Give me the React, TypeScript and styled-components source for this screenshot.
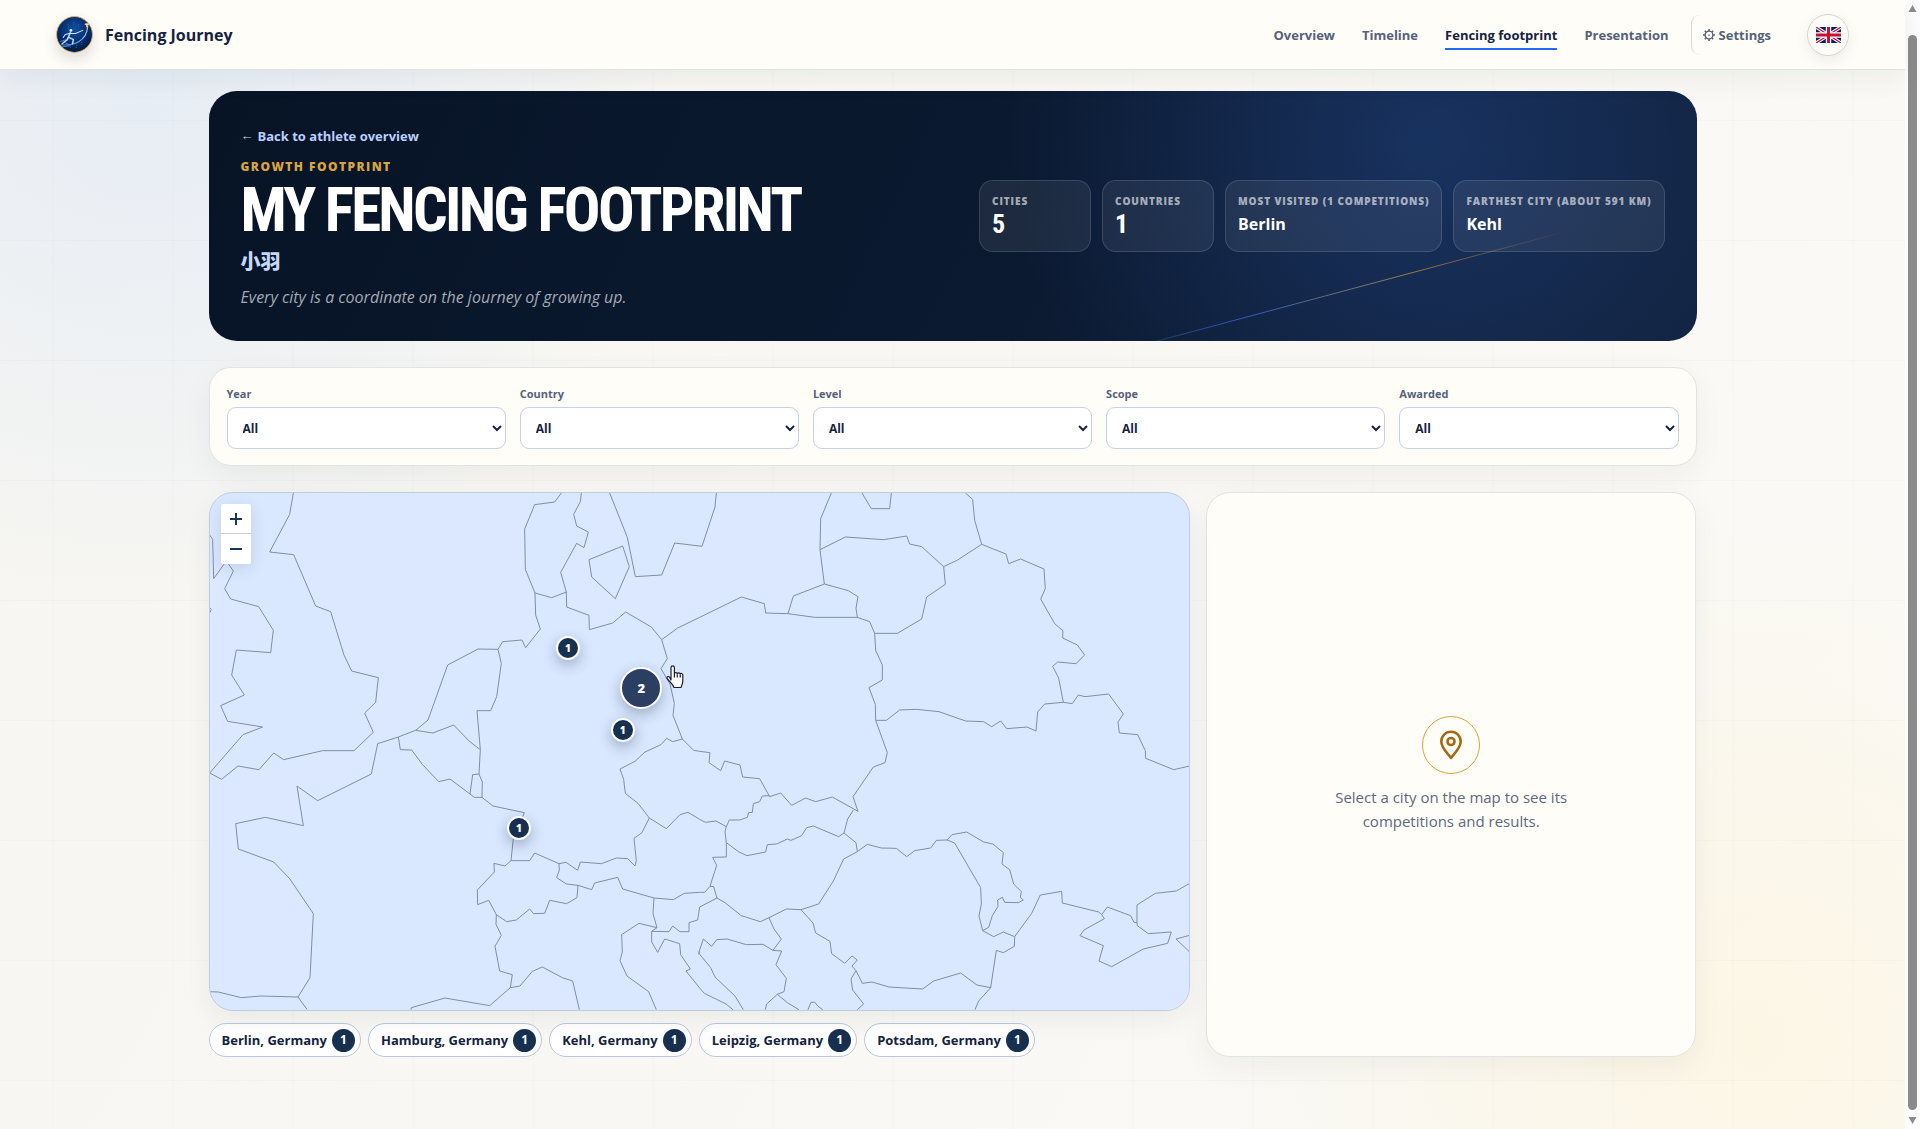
import React, { useState } from "react";
import styled, { createGlobalStyle, css } from "styled-components";

const sans = `"Open Sans", "Noto Sans", "Noto Sans CJK SC", sans-serif`;
const narrow = `"Arial Narrow", "Liberation Sans Narrow", "Roboto Condensed", Roboto, sans-serif`;

const ink = "#14233f";
const muted = "#54627a";
const paper = "#fffdf8";
const navy = "#17304f";

const GlobalStyle = createGlobalStyle`
  *, *::before, *::after { box-sizing: border-box; }
  html { scrollbar-width: none; }
  body {
    margin: 0;
    color: ${ink};
    background: #f8f7f3;
    font-family: ${sans};
    font-size: 16px;
    line-height: 24px;
  }
  h1, p, ul, dl, dd { margin: 0; padding: 0; }
  button, select { font: inherit; color: inherit; }
`;

const Shell = styled.div`
  display: flex;
  align-items: stretch;
  min-height: 100vh;
`;

const Page = styled.div`
  flex: 1;
  min-width: 0;
  background:
    linear-gradient(90deg, rgba(30, 60, 110, 0.025) 1px, transparent 1px) center top / 120px 120px,
    linear-gradient(rgba(30, 60, 110, 0.025) 1px, transparent 1px) center top / 120px 120px,
    radial-gradient(circle at 8% 8%, rgba(190, 215, 255, 0.28), transparent 26%),
    radial-gradient(circle at 92% 92%, rgba(255, 236, 180, 0.26), transparent 26%),
    linear-gradient(120deg, #f6f5f1, #fbfaf6);
`;

const Header = styled.header`
  position: sticky;
  top: 0;
  z-index: 5;
  display: flex;
  align-items: center;
  justify-content: space-between;
  height: 70px;
  padding: 0 56px;
  background: ${paper};
  border-bottom: 1px solid #e3e2df;
  box-shadow: 0 8px 28px rgba(16, 32, 60, 0.06);
`;

const Brand = styled.a`
  display: flex;
  align-items: center;
  gap: 12px;
  color: ${ink};
  font-size: 16px;
  font-weight: 700;
  text-decoration: none;

  svg {
    border-radius: 50%;
    box-shadow: 0 6px 14px rgba(16, 32, 60, 0.16);
  }
`;

const Nav = styled.nav`
  display: flex;
  align-items: center;
  gap: 27px;
  font-size: 13px;
  font-weight: 700;
  line-height: 20px;
`;

const NavLink = styled.a<{ $active?: boolean }>`
  padding: 5px 0 3px;
  color: ${(p) => (p.$active ? ink : muted)};
  border-bottom: 2px solid ${(p) => (p.$active ? "#2469f5" : "transparent")};
  text-decoration: none;
`;

const SettingsLink = styled.a`
  display: flex;
  align-items: center;
  gap: 4px;
  height: 40px;
  margin-left: -5px;
  padding: 0 9px 0 11px;
  color: ${muted};
  border-left: 1px solid #d9d7d0;
  border-radius: 9px;
  text-decoration: none;
`;

const LanguageButton = styled.button`
  display: grid;
  place-items: center;
  width: 42px;
  height: 42px;
  padding: 0;
  background: ${paper};
  border: 1px solid #d9d5cc;
  border-radius: 50%;
  box-shadow: 0 5px 14px rgba(16, 32, 60, 0.08);
`;

const Main = styled.main`
  display: grid;
  gap: 26px;
  width: calc(100% - 48px);
  max-width: 1488px;
  margin: 0 auto;
  padding: 21px 0 72px;
`;

const Hero = styled.section`
  position: relative;
  display: flex;
  align-items: center;
  justify-content: space-between;
  gap: 32px;
  padding: 32px;
  overflow: hidden;
  color: #fff;
  background:
    radial-gradient(circle at 82% 20%, rgba(43, 88, 170, 0.36), transparent 34%),
    linear-gradient(115deg, #071426, #0b1930 50%, #10203a);
  border-radius: 28px;

  &::after {
    content: "";
    position: absolute;
    right: 8%;
    bottom: 18%;
    width: 500px;
    height: 1px;
    background: linear-gradient(90deg, transparent, #3f7bf0, #d9a441, transparent);
    opacity: 0.65;
    transform: rotate(-15deg);
  }
`;

const BackLink = styled.a`
  display: flex;
  gap: 4px;
  color: #b9d0ff;
  font-size: 13px;
  font-weight: 700;
  line-height: 26px;
  text-decoration: none;

  span {
    font-family: "Liberation Sans", sans-serif;
    font-weight: 400;
  }
`;

const Eyebrow = styled.p`
  margin-top: 8px;
  color: #d9a441;
  font-size: 12px;
  font-weight: 800;
  letter-spacing: 0.12em;
  line-height: 20px;
  text-transform: uppercase;
`;

const Title = styled.h1`
  padding-top: 2px;
  font-family: ${narrow};
  font-size: 61px;
  font-weight: 700;
  letter-spacing: -0.045em;
  line-height: 62px;
  text-transform: uppercase;
`;

const Athlete = styled.p`
  color: #c6d8fb;
  font-size: 20px;
  font-weight: 800;
  line-height: 41px;
`;

const Motto = styled.p`
  padding-top: 3px;
  color: #a4aab3;
  font-size: 16px;
  font-style: italic;
  line-height: 24px;
`;

const Stats = styled.dl`
  display: flex;
  flex-wrap: wrap;
  gap: 11px;
`;

const Stat = styled.div`
  min-width: 112px;
  min-height: 72px;
  padding: 12px;
  background: rgba(255, 255, 255, 0.07);
  border: 1px solid rgba(255, 255, 255, 0.13);
  border-radius: 14px;

  dt {
    color: rgba(255, 255, 255, 0.62);
    font-size: 10px;
    font-weight: 800;
    letter-spacing: 0.09em;
    line-height: 16px;
    text-transform: uppercase;
  }
`;

const StatValue = styled.dd<{ $numeric?: boolean }>`
  line-height: 30px;
  ${(p) =>
    p.$numeric
      ? css`
          font-family: ${narrow};
          font-size: 26px;
          font-weight: 700;
        `
      : css`
          font-size: 16px;
          font-weight: 700;
        `}
`;

const surface = css`
  background: ${paper};
  border: 1px solid #e2e3e3;
  box-shadow: 0 10px 30px rgba(16, 32, 60, 0.05);
`;

const Filters = styled.form`
  ${surface}
  display: grid;
  grid-template-columns: repeat(5, 1fr);
  gap: 14px;
  padding: 16px 17px;
  border-radius: 22px;
`;

const Field = styled.label`
  display: grid;
  gap: 4px;
  color: ${muted};
  font-size: 11px;
  font-weight: 700;
  line-height: 19px;
`;

const Select = styled.select`
  width: 100%;
  height: 42px;
  padding: 0 11px;
  color: ${ink};
  background: #fff;
  border: 1px solid #c5d1e6;
  border-radius: 9px;
  font-size: 12px;
  font-weight: 700;
`;

const Explorer = styled.div`
  display: grid;
  grid-template-columns: 2fr 1fr;
  gap: 16px;
`;

const MapColumn = styled.div`
  display: grid;
  gap: 12px;
  min-width: 0;
`;

const MapFrame = styled.section`
  position: relative;
  height: 519px;
  overflow: hidden;
  background: #d9e8ff;
  border: 1px solid #bccde8;
  border-radius: 24px;
  box-shadow: 0 10px 26px rgba(16, 32, 60, 0.06);
`;

const MapDrawing = styled.svg`
  display: block;
  width: 100%;
  height: 100%;
`;

const ZoomControl = styled.div`
  position: absolute;
  top: 11px;
  left: 11px;
  display: grid;
  background: #fff;
  border-radius: 2px;
  box-shadow: 0 4px 16px rgba(16, 32, 60, 0.12);
`;

const ZoomButton = styled.button`
  display: grid;
  place-items: center;
  width: 30px;
  height: 30px;
  padding: 0;
  color: #16355f;
  background: none;
  border: 0;

  &:first-child {
    border-bottom: 1px solid #ccc;
  }
`;

const Marker = styled.button<{ $x: number; $y: number; $cluster?: boolean }>`
  position: absolute;
  left: ${(p) => p.$x}%;
  top: ${(p) => p.$y}%;
  display: grid;
  place-items: center;
  width: ${(p) => (p.$cluster ? 42 : 24)}px;
  height: ${(p) => (p.$cluster ? 42 : 24)}px;
  padding: 0;
  color: #fff;
  background: ${(p) => (p.$cluster ? "#2b3f63" : navy)};
  border: 2px solid #fff;
  border-radius: 50%;
  box-shadow: 0 5px 14px rgba(16, 32, 60, 0.3);
  font-size: ${(p) => (p.$cluster ? 13 : 10)}px;
  font-weight: 800;
  line-height: 16px;
  transform: translate(-50%, -50%);
`;

const Pointer = styled.svg`
  position: absolute;
  left: 46.6%;
  top: 33.2%;
`;

const Chips = styled.ul`
  display: flex;
  flex-wrap: wrap;
  gap: 7px;
  list-style: none;
`;

const Chip = styled.button`
  display: flex;
  align-items: center;
  gap: 5px;
  height: 34px;
  padding: 0 5px 0 12px;
  background: #fff;
  border: 1px solid #b9c7e0;
  border-radius: 17px;
  font-size: 13px;
  font-weight: 700;
  line-height: 20px;
`;

const ChipCount = styled.span`
  display: grid;
  place-items: center;
  width: 23px;
  height: 23px;
  color: #fff;
  background: ${navy};
  border-radius: 50%;
  font-size: 12px;
`;

const Detail = styled.aside`
  ${surface}
  display: grid;
  align-content: center;
  justify-items: center;
  gap: 11px;
  padding: 24px;
  border-radius: 24px;
  color: #5b6980;
  font-size: 15px;
  text-align: center;

  p {
    max-width: 270px;
  }
`;

const PinCircle = styled.span`
  display: grid;
  place-items: center;
  width: 58px;
  height: 58px;
  border: 1px solid #d9a441;
  border-radius: 50%;
`;

const Rail = styled.div`
  position: sticky;
  top: 0;
  display: flex;
  flex-direction: column;
  align-items: center;
  gap: 23px;
  width: 15px;
  height: 100vh;
  padding: 4px 0;
  background: #fcfcfc;

  svg {
    flex: none;
  }
`;

const Thumb = styled.span`
  flex: 1;
  width: 9px;
  margin-bottom: -16px;
  background: #8b8b8b;
  border-radius: 5px;
`;

const Logo = () => (
  <svg width="37" height="37" viewBox="0 0 36 36" aria-hidden="true">
    <defs>
      <radialGradient id="orb" cx="50%" cy="35%" r="65%">
        <stop offset="0" stopColor="#10509f" />
        <stop offset="0.55" stopColor="#082f70" />
        <stop offset="1" stopColor="#04173c" />
      </radialGradient>
      <linearGradient id="trail" x1="0" y1="1" x2="1" y2="0">
        <stop offset="0" stopColor="#3b8cf0" />
        <stop offset="0.6" stopColor="#8dbcf2" />
        <stop offset="1" stopColor="#f5c982" />
      </linearGradient>
    </defs>
    <circle cx="18" cy="18" r="17.5" fill="url(#orb)" stroke="#d4ad66" />
    <path d="M12 8v5M17 6v3M22 8v4M25 25v4M14 28v4M20 28v3" stroke="#1d69bd" strokeWidth="1" strokeDasharray="1 1" />
    <path d="M5 28c11 1 25-2 26-19" fill="none" stroke="url(#trail)" strokeWidth="1.1" />
    <path d="M4 25l6-2M6 30l8-1M9 26l4 2" stroke="#4c9af5" strokeWidth="0.8" />
    <circle cx="14.5" cy="14" r="1.4" fill="#e8f2ff" />
    <path d="M14 16l-3 7-5 4M13 21l4 2-1 4" fill="none" stroke="#b9d6fb" strokeWidth="1.5" strokeLinecap="round" strokeLinejoin="round" />
    <path d="M14 17l5 0 7-3M13 17l-4 1-2 3" fill="none" stroke="#cfe3ff" strokeWidth="1" strokeLinecap="round" strokeLinejoin="round" />
    <path d="M28 8h4M30 7v4" stroke="#ffd99a" strokeWidth="1.4" />
  </svg>
);

const Gear = () => (
  <svg width="12" height="12" viewBox="0 0 12 12" fill="none" stroke="currentColor" aria-hidden="true">
    <circle cx="6" cy="6" r="3.9" strokeWidth="1.4" />
    <circle cx="6" cy="6" r="0.8" fill="currentColor" stroke="none" />
    <path d="M6 0v2M6 10v2M0 6h2M10 6h2M1.8 1.8l1.3 1.3M8.9 8.9l1.3 1.3M1.8 10.2l1.3-1.3M8.9 3.1l1.3-1.3" strokeWidth="1.5" />
  </svg>
);

const UnionFlag = () => (
  <svg width="25" height="16" viewBox="0 0 60 38" preserveAspectRatio="none" aria-hidden="true">
    <path fill="#012169" d="M0 0h60v38H0z" />
    <path d="M0 0l60 38M60 0L0 38" stroke="#fff" strokeWidth="8" />
    <path d="M0 0l60 38M60 0L0 38" stroke="#c8102e" strokeWidth="3" />
    <path d="M30 0v38M0 19h60" stroke="#fff" strokeWidth="13" />
    <path d="M30 0v38M0 19h60" stroke="#c8102e" strokeWidth="7" />
  </svg>
);

const Pin = () => (
  <svg width="24" height="30" viewBox="0 0 24 30" fill="none" stroke="#a36a12" strokeWidth="2.6" strokeLinejoin="round" aria-hidden="true">
    <path d="M12 28C8 22.500 2.300 18 2.300 11.500a9.700 9.700 0 0 1 19.400 0C21.700 18 16 22.500 12 28z" />
    <circle cx="12" cy="11.500" r="3.500" />
  </svg>
);

/* Outlines are stored per map sheet; each sheet is 1500 x 855 map units. */
const sheets: { at: [number, number]; lines: string[] }[] = [
  {
    at: [0, 0],
    lines: [
      "281,24 270,88 210,201 282,209 348,363 393,380 433,510 456,558 536,578 528,652 495,684 521,742 463,797 369,797 252,824 222,804 178,854 115,843 66,883 30,864 130,749 189,726 84,709 63,662 134,630 96,570 110,495 213,503 221,436 177,365 93,342 75,311 101,258 80,228 42,281 39,163 30,150",
      "30,368 35,373 30,384",
      "1085,24 1065,51 1005,59 975,132 977,253 1006,324 1008,390 1022,432 978,488 967,465 909,470 895,493 835,492 744,540 685,705 648,736 596,756 534,776 515,867",
      "1006,324 1056,338 1100,321",
      "1145,24 1142,50 1122,88 1131,123 1166,141 1153,188 1131,175 1083,262 1100,321 1101,366 1168,391 1169,434 1239,414 1278,381 1355,426 1386,464 1434,429 1500,397",
      "1168,224 1269,183 1289,245 1247,341 1176,276 1168,224",
      "1230,24 1283,157 1307,275 1386,270 1425,174 1507,184 1546,66 1550,24",
      "1386,464 1403,521 1384,551 1411,597 1424,655 1420,691 1448,762 1482,796 1500,799",
      "1448,762 1419,770 1401,760 1384,779 1336,801 1306,829 1261,852 1272,883",
      "895,493 905,535 891,635 873,677 832,677 842,794 838,867",
      "648,736 700,744 762,720 808,768 842,794",
      "596,756 602,794 636,795 668,838 717,890",
    ],
  },
  {
    at: [1500, 0],
    lines: [
      "0,397 125,336 194,356 198,384 265,386 345,397 473,397 510,410 525,445 528,496 548,540 548,585 508,608 527,658 528,706 563,803 556,833 521,846 460,935",
      "0,799 31,803 28,833 63,857 75,828 121,840 129,876",
      "529,706 560,706 600,675 650,673 718,680 798,708 852,710 876,725 903,708 921,731 982,726 1009,738 1014,681 1035,657 1091,652 1118,656 1136,630 1156,635 1227,627 1271,687 1255,711 1259,744 1314,749 1337,797 1338,820 1422,854 1470,843",
      "1091,652 1077,579 1059,544 1074,531 1129,536 1155,510 1133,480 1089,459 1090,437 1065,416 1023,342 1037,311 1033,252 963,222 927,236 919,207 846,178 825,106 819,43 797,24",
      "846,178 774,225 732,245 666,185 630,177 621,153 552,164 437,156 361,194 363,101 395,24",
      "361,194 374,297 281,333 265,386",
      "374,297 446,317 475,335 469,370 473,397",
      "732,245 737,298 681,336 666,402 593,445 525,445",
      "487,24 515,71 570,71 575,24",
    ],
  },
  {
    at: [0, 855],
    lines: [
      "515,12 354,92 292,48 311,167 197,142 108,161 116,237 222,276 270,326 341,431 331,623 295,681 322,718",
      "295,681 184,678 125,683 56,666 30,665",
      "1272,28 1277,70 1315,100 1349,144",
      "717,35 751,27 811,72 824,82 847,82 880,108 974,128 955,174 941,206 934,272",
      "811,72 819,14 838,12 848,36 847,82",
      "934,272 990,272 1005,249 1078,281 1099,277 1134,301 1142,276 1205,281 1250,264 1284,266 1306,288 1310,272 1303,205 1327,188 1349,144 1400,176 1441,134 1465,127 1500,148",
      "934,272 916,288 883,280 884,306 833,360 834,404 867,391 890,434 921,455 950,450 990,417 1002,431 1035,430 1050,391 1101,401 1132,383 1135,346 1100,342 1071,323 1079,300 1078,281",
      "1135,346 1176,359 1185,339 1254,322 1269,357 1363,384 1421,389 1454,370 1500,367",
      "890,434 889,463 905,496 886,529 900,603 938,614 932,653 961,648 998,604 1028,591 1088,623 1119,633 1139,719",
      "634,719 635,713 736,684 870,707 932,653",
      "1363,384 1360,431 1372,473 1318,460 1266,494 1268,546 1261,572 1282,618 1347,665 1370,719",
      "1372,473 1356,484 1356,516 1374,547 1395,507 1440,521 1443,554 1472,597 1459,603 1500,654",
      "1356,484 1408,485 1419,468 1441,485 1468,485 1468,458 1494,450 1500,411",
    ],
  },
  {
    at: [1500, 855],
    lines: [
      "129,21 180,26 210,80 243,69 276,106 318,84 348,95 398,81 475,124 460,80",
      "210,77 188,78 180,95 161,101 158,127 147,128 143,142 120,150 89,150 80,170 76,185 80,218 80,261 39,262 51,286 31,349 42,350 52,384 76,398 125,437 182,455 208,443 260,417 304,419 357,402 401,333 432,267 473,245 469,218 433,189 444,147 461,120",
      "0,148 17,157 49,153 80,170",
      "0,367 15,367 31,349",
      "0,411 52,384",
      "80,218 118,246 142,257 198,246 203,224 231,222 263,207 274,211 306,197 321,173 341,168 417,200 433,189",
      "0,654 14,670 79,702 100,719",
      "-3,553 0,540 11,507 36,529 51,509 82,507 140,524 190,523 220,541 246,543 229,584 260,625 253,665 233,673 201,702 197,719",
      "233,673 263,698 298,719",
      "-3,545 0,553 33,593 46,621 106,678 131,719",
      "208,443 223,477 245,507 220,541",
      "304,419 340,459 348,489 391,514 396,551 435,580 457,558 473,570 457,588 469,602 488,640 517,636 568,651 669,657 702,633 783,609 832,645 873,653 890,541 911,548 944,529 945,500 911,486 882,500 849,482 838,438 845,402 843,353 765,219 742,210 710,211 693,234 645,242 621,260 590,235 545,234 503,223 473,245",
      "469,602 454,627 459,660 492,702 473,719",
      "873,653 837,693 826,719",
      "325,719 334,697 345,696 354,708 369,719",
      "742,210 757,194 801,186 852,216 880,222 911,248 907,282 930,299 942,342 965,365 962,382 971,390 956,398 915,397 908,382 894,390 895,409 878,437 867,472 849,482",
      "945,500 996,430 1022,375 1086,364 1088,399 1197,426 1206,434 1223,411 1293,437 1303,457 1312,458 1312,405 1367,370 1430,363 1470,340",
      "1206,434 1214,446 1153,480 1141,497 1211,527 1198,573 1236,590 1331,537 1404,520 1415,486 1346,491 1313,467 1312,458",
      "1470,496 1429,507 1470,546",
    ],
  },
];

const seas = [
  "281,24 270,88 210,201 282,209 348,363 393,380 433,510 456,558 536,578 528,652 495,684 521,742 463,797 369,797 252,824 222,804 178,854 115,843 66,883 30,864 30,1520 56,1521 125,1538 295,1536 331,1478 341,1286 270,1181 222,1131 116,1092 108,1016 197,997 311,1022 292,903 354,947 515,867 534,776 648,736 685,705 744,540 835,492 909,470 967,465 978,488 1022,432 1008,390 1006,324 977,253 975,132 1005,59 1065,51 1085,24",
  "1145,24 1142,50 1122,88 1166,141 1153,188 1131,175 1083,262 1100,321 1101,366 1168,391 1169,434 1239,414 1278,381 1355,426 1386,464 1434,429 1625,336 1694,356 1698,384 1765,386 1781,333 1874,297 1861,194 1863,101 1895,24 1550,24 1546,66 1507,184 1425,174 1386,270 1307,275 1283,157 1230,24",
  "30,150 39,163 42,281 80,228 101,258 75,311 93,342 177,365 221,436 213,503 110,495 96,570 134,630 63,662 84,709 189,726 130,749 30,864",
  "634,1575 736,1539 870,1562 932,1508 998,1459 1028,1446 1119,1488 1139,1575",
  "1372,1328 1318,1315 1266,1349 1261,1427 1282,1473 1347,1520 1370,1575 1600,1575 1500,1509 1459,1458 1472,1452 1443,1409 1440,1376 1395,1362 1374,1402 1356,1371",
  "2326,1575 2373,1508 2390,1396 2444,1384 2445,1355 2522,1230 2586,1219 2588,1254 2706,1289 2714,1301 2641,1352 2711,1382 2698,1428 2736,1445 2904,1375 2915,1341 2813,1322 2812,1260 2867,1225 2970,1195 2970,1575",
];

const EuropeMap = () => (
  <MapDrawing viewBox="30 24 2940 1551" preserveAspectRatio="xMidYMid slice" role="img" aria-label="Map of central Europe">
    {seas.map((points) => (
      <polygon key={points} points={points} fill="#dce8ff" />
    ))}
    <polygon points="1168,224 1269,183 1289,245 1247,341 1176,276" fill="#d9e8ff" />
    <g fill="none" stroke="#7f8ea8" strokeWidth="3" strokeLinejoin="round">
      {sheets.map(({ at, lines }) => (
        <g key={at.join()} transform={`translate(${at[0]} ${at[1]})`}>
          {lines.map((points) => (
            <polyline key={points} points={points} />
          ))}
        </g>
      ))}
    </g>
  </MapDrawing>
);

const navItems = ["Overview", "Timeline", "Fencing footprint", "Presentation"];

const stats = [
  { label: "Cities", value: "5", numeric: true },
  { label: "Countries", value: "1", numeric: true },
  { label: "Most visited (1 competitions)", value: "Berlin" },
  { label: "Farthest city (about 591 km)", value: "Kehl" },
];

const filters = ["Year", "Country", "Level", "Scope", "Awarded"];

const markers = [
  { name: "Hamburg", count: 1, x: 36.6, y: 30 },
  { name: "Berlin and Potsdam", count: 2, x: 44.1, y: 37.8, cluster: true },
  { name: "Leipzig", count: 1, x: 42.2, y: 45.8 },
  { name: "Kehl", count: 1, x: 31.6, y: 64.8 },
];

const cities = ["Berlin", "Hamburg", "Kehl", "Leipzig", "Potsdam"];

export default function App() {
  const [values, setValues] = useState<Record<string, string>>({});

  return (
    <>
      <GlobalStyle />
      <Shell>
        <Page>
          <Header>
            <Brand href="#home">
              <Logo />
              Fencing Journey
            </Brand>
            <Nav aria-label="Main">
              {navItems.map((item) => (
                <NavLink key={item} href="#" $active={item === "Fencing footprint"}>
                  {item}
                </NavLink>
              ))}
              <SettingsLink href="#settings">
                <Gear />
                Settings
              </SettingsLink>
              <LanguageButton type="button" aria-label="Language">
                <UnionFlag />
              </LanguageButton>
            </Nav>
          </Header>

          <Main>
            <Hero>
              <div>
                <BackLink href="#overview">
                  <span>←</span>
                  Back to athlete overview
                </BackLink>
                <Eyebrow>Growth footprint</Eyebrow>
                <Title>My fencing footprint</Title>
                <Athlete>小羽</Athlete>
                <Motto>Every city is a coordinate on the journey of growing up.</Motto>
              </div>
              <Stats>
                {stats.map((stat) => (
                  <Stat key={stat.label}>
                    <dt>{stat.label}</dt>
                    <StatValue $numeric={stat.numeric}>{stat.value}</StatValue>
                  </Stat>
                ))}
              </Stats>
            </Hero>

            <Filters>
              {filters.map((name) => (
                <Field key={name}>
                  {name}
                  <Select
                    value={values[name] ?? "All"}
                    onChange={(e) => setValues({ ...values, [name]: e.target.value })}
                  >
                    <option>All</option>
                  </Select>
                </Field>
              ))}
            </Filters>

            <Explorer>
              <MapColumn>
                <MapFrame>
                  <EuropeMap />
                  <ZoomControl>
                    <ZoomButton type="button" aria-label="Zoom in">
                      <svg width="14" height="14" viewBox="0 0 14 14" stroke="currentColor" strokeWidth="2">
                        <path d="M1 7h12M7 1v12" />
                      </svg>
                    </ZoomButton>
                    <ZoomButton type="button" aria-label="Zoom out">
                      <svg width="14" height="14" viewBox="0 0 14 14" stroke="currentColor" strokeWidth="2">
                        <path d="M1 7h12" />
                      </svg>
                    </ZoomButton>
                  </ZoomControl>
                  {markers.map((m) => (
                    <Marker key={m.name} type="button" aria-label={m.name} $x={m.x} $y={m.y} $cluster={m.cluster}>
                      {m.count}
                    </Marker>
                  ))}
                  <Pointer width="18" height="24" viewBox="0 0 18 24" aria-hidden="true">
                    <path
                      d="M5 15V2.500a1.700 1.700 0 0 1 3.400 0V9c0-2 2.900-1.800 2.900 0 .2-1.600 2.800-1.500 2.900.3.200-1.300 2.600-1.100 2.600.6V16c0 3-1.200 4-1.700 6.500H8c-.6-2.500-3-4.500-6.600-8.500-1.300-2 .9-3.200 2.200-1.800z"
                      fill="#fff"
                      stroke="#1b1f30"
                      strokeWidth="1.2"
                      strokeLinejoin="round"
                    />
                    <path d="M8.400 9v3.500M11.300 9.500v3M14.200 10v2.500" stroke="#1b1f30" strokeWidth="1.200" />
                  </Pointer>
                </MapFrame>
                <Chips>
                  {cities.map((city) => (
                    <li key={city}>
                      <Chip type="button">
                        {city}, Germany
                        <ChipCount>1</ChipCount>
                      </Chip>
                    </li>
                  ))}
                </Chips>
              </MapColumn>
              <Detail>
                <PinCircle>
                  <Pin />
                </PinCircle>
                <p>Select a city on the map to see its competitions and results.</p>
              </Detail>
            </Explorer>
          </Main>
        </Page>
        <Rail aria-hidden="true">
          <svg width="9" height="8" viewBox="0 0 9 8">
            <path d="M4.500 1L8.500 8H.5z" fill="#8b8b8b" />
          </svg>
          <Thumb />
          <svg width="9" height="8" viewBox="0 0 9 8">
            <path d="M4.500 7L8.500 0H.5z" fill="#8b8b8b" />
          </svg>
        </Rail>
      </Shell>
    </>
  );
}
